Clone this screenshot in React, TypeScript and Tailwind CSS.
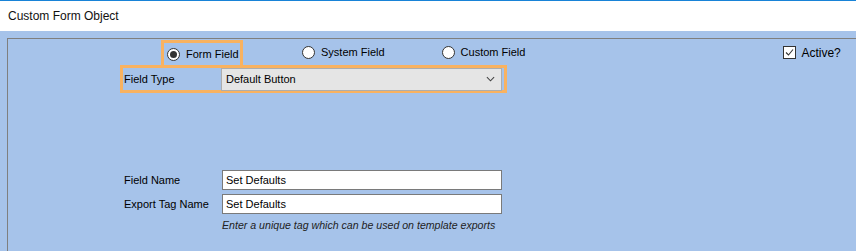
import React from "react";

function Radio({ checked }: { checked?: boolean }) {
  return (
    <span className="flex h-[13px] w-[13px] items-center justify-center rounded-full border border-[#333333] bg-white">
      {checked && <span className="h-[7px] w-[7px] rounded-full bg-[#333333]" />}
    </span>
  );
}

function TextInput({ value }: { value: string }) {
  return (
    <div className="flex h-[20px] w-[280px] items-center border border-[#7a7a7a] bg-white pl-[3px]">
      {value}
    </div>
  );
}

export default function App() {
  return (
    <div className="h-[251px] w-[856px] overflow-hidden bg-[#a6c3ea] font-['Liberation_Sans',Arial,sans-serif] text-[11px] text-black">
      <div className="flex h-[31px] items-center border-t border-[#1883d7] bg-white pl-[8px] text-[12px] text-[#111]">
        Custom Form Object
      </div>

      <div className="ml-[7px] mt-[7px] h-[213px] border-l border-t border-[#7f7f7f]">
        {/* source radios */}
        <div className="mt-[1px] flex h-[25px] items-center">
          <div className="ml-[153px] flex h-[26px] w-[82px] items-center gap-[6px] border-[3px] border-b-0 border-[#f9b260] pl-[3px]">
            <Radio checked />
            <span>Form Field</span>
          </div>
          <div className="ml-[59px] flex items-center gap-[6px]">
            <Radio />
            <span>System Field</span>
          </div>
          <div className="ml-[57px] flex items-center gap-[6px]">
            <Radio />
            <span>Custom Field</span>
          </div>
          <div className="ml-[258px] flex items-center gap-[5px] text-[12px]">
            <span className="flex h-[13px] w-[13px] items-center justify-center border border-[#333333] bg-white">
              <svg viewBox="0 0 11 11" className="h-[11px] w-[11px]" fill="none" stroke="#333" strokeWidth={1.1}>
                <path d="M2 5.5 L4.5 8 L9 2.5" />
              </svg>
            </span>
            <span>Active?</span>
          </div>
        </div>

        {/* field type */}
        <div className="ml-[112px] flex h-[28px] w-[387px] items-center border-[3px] border-[#f9b260]">
          <span className="w-[98px] pl-[1px]">Field Type</span>
          <div className="flex h-[23px] w-[281px] items-center justify-between border border-[#adadad] bg-[#e5e5e5] pl-[4px] pr-[6px]">
            <span>Default Button</span>
            <svg viewBox="0 0 10 6" className="h-[6px] w-[9px]" fill="none" stroke="#444" strokeWidth={1.2}>
              <path d="M1 1 L5 5 L9 1" />
            </svg>
          </div>
        </div>

        {/* name fields */}
        <div className="ml-[116px] mt-[77px] flex flex-col gap-[4px]">
          <div className="flex items-center">
            <span className="w-[98px]">Field Name</span>
            <TextInput value="Set Defaults" />
          </div>
          <div className="flex items-center">
            <span className="w-[98px]">Export Tag Name</span>
            <TextInput value="Set Defaults" />
          </div>
          <div className="ml-[98px] text-[10.6px] italic text-[#222]">
            Enter a unique tag which can be used on template exports
          </div>
        </div>
      </div>
    </div>
  );
}
